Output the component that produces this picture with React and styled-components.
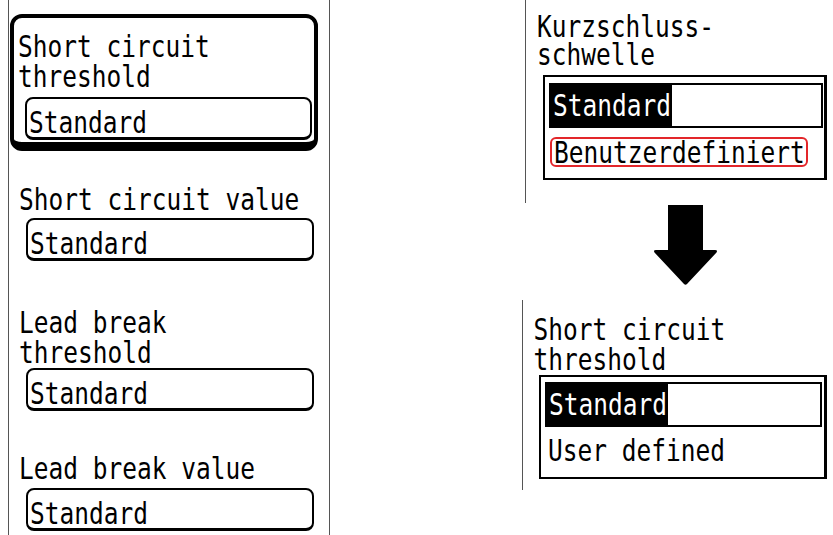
import React from "react";
import styled, { createGlobalStyle } from "styled-components";

const GlobalStyle = createGlobalStyle`
  html, body { margin: 0; padding: 0; background: #fff; }
  body { font-family: "DejaVu Sans Mono", "Liberation Mono", monospace; color: #000; }
`;

const Page = styled.div`
  display: flex;
  align-items: flex-start;
  width: 833px;
  height: 535px;
  overflow: hidden;
  padding-left: 8px;
  box-sizing: border-box;
  font-size: 24.5px;
`;

const LeftPanel = styled.section`
  width: 322px;
  height: 535px;
  flex: none;
  box-sizing: border-box;
  border-left: 1px solid #555;
  border-right: 1px solid #555;
  padding: 14px 0 0 1px;
  display: flex;
  flex-direction: column;
`;

const FocusFrame = styled.div`
  width: 308px;
  height: 137px;
  box-sizing: border-box;
  border: 4px solid #000;
  border-bottom-width: 9px;
  border-radius: 12px;
  padding: 14px 0 0 4px;
`;

const Field = styled.div`
  margin-top: ${(p) => p.$mt || 0}px;
`;

const Label = styled.div`
  line-height: ${(p) => p.$lh || 30}px;
  margin-left: ${(p) => p.$ml || 0}px;
  white-space: pre;
`;

const Line = styled.div`
  transform: scaleY(1.2);
  transform-origin: 50% 50%;
`;

const Select = styled.div`
  width: ${(p) => p.$w}px;
  height: 43px;
  box-sizing: border-box;
  border: 2px solid #000;
  border-bottom-width: 3px;
  border-radius: 8px;
  padding: 10px 0 0 2px;
  line-height: 28px;
  margin: ${(p) => p.$mt || 0}px 0 0 ${(p) => p.$ml || 0}px;
`;

const RightColumn = styled.div`
  margin-left: 192px;
  width: 311px;
  display: flex;
  flex-direction: column;
`;

const Group = styled.div`
  margin: ${(p) => p.$mt || 0}px 0 0 ${(p) => p.$ml || 0}px;
  height: ${(p) => p.$h}px;
  box-sizing: border-box;
  border-left: 1px solid #555;
  padding: ${(p) => p.$pt}px 0 0 ${(p) => p.$pl}px;
`;

const Dropdown = styled.div`
  width: ${(p) => p.$w}px;
  height: ${(p) => p.$h}px;
  box-sizing: border-box;
  border: 2px solid #000;
  border-right-width: 3px;
  margin: ${(p) => p.$mt}px 0 0 ${(p) => p.$ml}px;
  padding: ${(p) => p.$pt}px 0 0 4px;
`;

const OptionRow = styled.div`
  width: ${(p) => p.$w}px;
  height: 45px;
  box-sizing: border-box;
  border: 2px solid #000;
  display: flex;
`;

const Highlight = styled.div`
  background: #000;
  color: #fff;
  height: 100%;
  box-sizing: border-box;
  padding: 3px 1px 0 2px;
  line-height: 36px;
`;

const MarkedOption = styled.div`
  width: fit-content;
  height: 30px;
  box-sizing: border-box;
  margin: 9px 0 0 1px;
  border: 2px solid #e3262a;
  border-radius: 6px;
  padding: 1px 1px 0 2px;
  line-height: 25px;
`;

const PlainOption = styled.div`
  margin-top: 9px;
  padding-left: 3px;
  line-height: 30px;
`;

const ArrowBox = styled.div`
  margin: 2px 0 0 131px;
  width: 65px;
  height: 80px;
`;

const DownArrow = () => (
  <svg width="65" height="80" viewBox="0 0 65 80">
    <path
      d="M15 0 H50 V45 H62 Q65 45 63.5 47.5 L34 79 Q32.5 80.5 31 79 L1.5 47.5 Q0 45 3 45 H15 Z"
      fill="#000"
    />
  </svg>
);

const Lines = ({ lines, lh, ml }) => (
  <Label $lh={lh} $ml={ml}>
    {lines.map((l) => (
      <Line key={l}>{l}</Line>
    ))}
  </Label>
);

export default function App() {
  return (
    <>
      <GlobalStyle />
      <Page>
        <LeftPanel>
          <FocusFrame>
            <Lines lines={["Short circuit", "threshold"]} />
            <Select $w={287} $mt={5} $ml={7}>
              <Line>Standard</Line>
            </Select>
          </FocusFrame>
          <Field $mt={34}>
            <Lines lines={["Short circuit value"]} ml={9} />
            <Select $w={288} $mt={3} $ml={16}>
              <Line>Standard</Line>
            </Select>
          </Field>
          <Field $mt={47}>
            <Lines lines={["Lead break", "threshold"]} ml={9} />
            <Select $w={288} $mt={0} $ml={16}>
              <Line>Standard</Line>
            </Select>
          </Field>
          <Field $mt={43}>
            <Lines lines={["Lead break value"]} ml={9} />
            <Select $w={288} $mt={4} $ml={16}>
              <Line>Standard</Line>
            </Select>
          </Field>
        </LeftPanel>
        <RightColumn>
          <Group $ml={3} $h={203} $pt={12.5} $pl={11}>
            <Lines lines={["Kurzschluss-", "schwelle"]} lh={28} />
            <Dropdown $w={284} $h={105} $mt={6.5} $ml={6} $pt={6}>
              <OptionRow $w={274}>
                <Highlight>
                  <Line>Standard</Line>
                </Highlight>
              </OptionRow>
              <MarkedOption>
                <Line>Benutzerdefiniert</Line>
              </MarkedOption>
            </Dropdown>
          </Group>
          <ArrowBox>
            <DownArrow />
          </ArrowBox>
          <Group $mt={15} $h={190} $pt={14.5} $pl={10.5}>
            <Lines lines={["Short circuit", "threshold"]} />
            <Dropdown $w={288} $h={104} $mt={0.5} $ml={5.5} $pt={5}>
              <OptionRow $w={277}>
                <Highlight>
                  <Line>Standard</Line>
                </Highlight>
              </OptionRow>
              <PlainOption>
                <Line>User defined</Line>
              </PlainOption>
            </Dropdown>
          </Group>
        </RightColumn>
      </Page>
    </>
  );
}
